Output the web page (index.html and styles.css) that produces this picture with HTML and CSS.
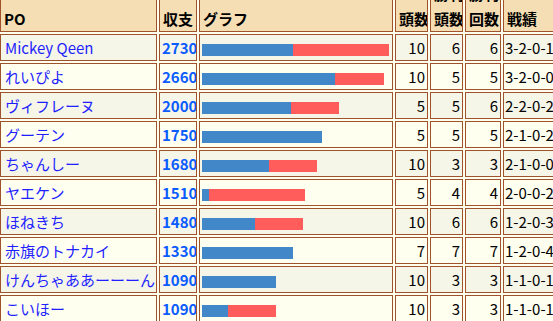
FILE: index.html
```html
<!DOCTYPE html>
<html lang="ja">
<head>
<meta charset="utf-8">
<title>PO</title>
<link rel="stylesheet" href="styles.css">
</head>
<body>
<table class="po-table">
  <thead>
    <tr>
      <th class="c-name">PO</th>
      <th class="c-money">収支</th>
      <th class="c-graph">グラフ</th>
      <th class="c-num1">頭数</th>
      <th class="c-num2">勝利<br>頭数</th>
      <th class="c-num3">勝利<br>回数</th>
      <th class="c-rec">戦績</th>
    </tr>
  </thead>
  <tbody>
    <tr class="odd"><td class="name"><a href="#">Mickey Qeen</a></td><td class="money">2730</td><td class="graph"><div class="bar"><span class="plus" style="width:91px"></span><span class="minus" style="width:96px"></span></div></td><td class="num">10</td><td class="num">6</td><td class="num">6</td><td class="rec">3-2-0-1</td></tr>
    <tr><td class="name"><a href="#">れいぴよ</a></td><td class="money">2660</td><td class="graph"><div class="bar"><span class="plus" style="width:133px"></span><span class="minus" style="width:49px"></span></div></td><td class="num">10</td><td class="num">5</td><td class="num">5</td><td class="rec">3-2-0-0</td></tr>
    <tr class="odd"><td class="name"><a href="#">ヴィフレーヌ</a></td><td class="money">2000</td><td class="graph"><div class="bar"><span class="plus" style="width:89px"></span><span class="minus" style="width:48px"></span></div></td><td class="num">5</td><td class="num">5</td><td class="num">6</td><td class="rec">2-2-0-2</td></tr>
    <tr><td class="name"><a href="#">グーテン</a></td><td class="money">1750</td><td class="graph"><div class="bar"><span class="plus" style="width:120px"></span></div></td><td class="num">5</td><td class="num">5</td><td class="num">5</td><td class="rec">2-1-0-2</td></tr>
    <tr class="odd"><td class="name"><a href="#">ちゃんしー</a></td><td class="money">1680</td><td class="graph"><div class="bar"><span class="plus" style="width:67px"></span><span class="minus" style="width:48px"></span></div></td><td class="num">10</td><td class="num">3</td><td class="num">3</td><td class="rec">2-1-0-0</td></tr>
    <tr><td class="name"><a href="#">ヤエケン</a></td><td class="money">1510</td><td class="graph"><div class="bar"><span class="plus" style="width:7px"></span><span class="minus" style="width:96px"></span></div></td><td class="num">5</td><td class="num">4</td><td class="num">4</td><td class="rec">2-0-0-2</td></tr>
    <tr class="odd"><td class="name"><a href="#">ほねきち</a></td><td class="money">1480</td><td class="graph"><div class="bar"><span class="plus" style="width:53px"></span><span class="minus" style="width:48px"></span></div></td><td class="num">10</td><td class="num">6</td><td class="num">6</td><td class="rec">1-2-0-3</td></tr>
    <tr><td class="name"><a href="#">赤旗のトナカイ</a></td><td class="money">1330</td><td class="graph"><div class="bar"><span class="plus" style="width:91px"></span></div></td><td class="num">7</td><td class="num">7</td><td class="num">7</td><td class="rec">1-2-0-4</td></tr>
    <tr class="odd"><td class="name"><a href="#">けんちゃああーーーん</a></td><td class="money">1090</td><td class="graph"><div class="bar"><span class="plus" style="width:74px"></span></div></td><td class="num">10</td><td class="num">3</td><td class="num">3</td><td class="rec">1-1-0-1</td></tr>
    <tr><td class="name"><a href="#">こいほー</a></td><td class="money">1090</td><td class="graph"><div class="bar"><span class="plus" style="width:26px"></span><span class="minus" style="width:48px"></span></div></td><td class="num">10</td><td class="num">3</td><td class="num">3</td><td class="rec">1-1-0-1</td></tr>
  </tbody>
</table>
</body>
</html>
```

FILE: styles.css
```css
html, body {
  margin: 0;
  padding: 0;
  background: #fffff0;
  overflow: hidden;
}

body {
  font-family: "Noto Sans CJK JP", sans-serif;
  font-size: 15px;
  color: #000;
}

.po-table {
  border-collapse: separate;
  border-spacing: 2px;
  table-layout: fixed;
  width: 600px;
  margin: -23px 0 0 -2px;
}

.po-table th,
.po-table td {
  box-sizing: border-box;
  border: 1px solid #a0522d;
  white-space: nowrap;
  overflow: hidden;
}

.po-table th {
  background: #f5deb3;
  font-weight: bold;
  text-align: left;
  vertical-align: bottom;
  line-height: 25px;
  padding: 1px 2px 0 3px;
}

.c-name { width: 157px; }
.c-money { width: 38px; }
.c-graph { width: 194px; }
.c-num1 { width: 33px; }
.c-num2 { width: 33px; }
.c-num3 { width: 36px; }
.c-rec { width: 101px; }

.po-table td {
  line-height: 21px;
  padding: 2px 2px;
  background: #fffff0;
  vertical-align: middle;
}

.po-table tr.odd td {
  background: #f5f5e8;
}

.po-table td.name {
  padding-left: 4px;
}

.name a {
  color: #1f1fff;
  text-decoration: none;
}

.po-table td.money {
  text-align: right;
  font-weight: bold;
  color: #0a5cff;
  padding-right: 1px;
}

.po-table td.graph {
  padding: 9px 2px 4px 2px;
}

.bar {
  display: flex;
  height: 12px;
}

.bar .plus {
  display: block;
  height: 12px;
  background: #4287c7;
}

.bar .minus {
  display: block;
  height: 12px;
  background: #ff5c5c;
}

.po-table td.num {
  text-align: right;
  padding-right: 2px;
}

.po-table td.rec {
  padding-left: 1px;
}
```
